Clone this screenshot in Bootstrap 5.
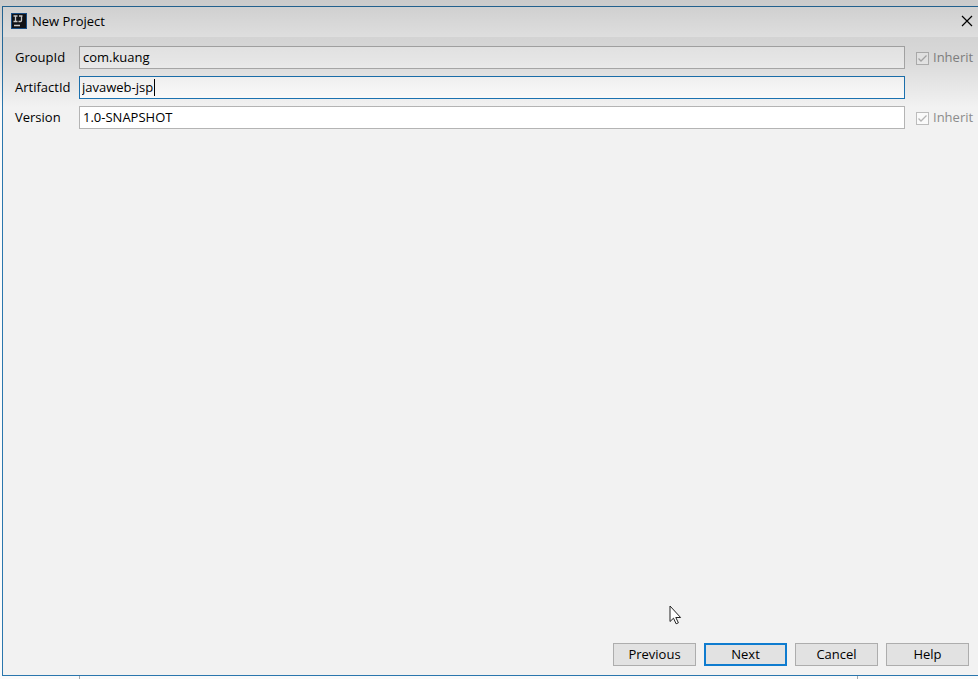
<!DOCTYPE html>
<html lang="en">
<head>
<meta charset="utf-8">
<meta name="viewport" content="width=device-width, initial-scale=1">
<title>New Project</title>
<link href="https://cdn.jsdelivr.net/npm/bootstrap@5.3.0/dist/css/bootstrap.min.css" rel="stylesheet">
<style>
body { font: 13px/20px "Open Sans", "Noto Sans", sans-serif; color: #000; background: #fafafa; padding: 6px 0 0 2px; }
.window { background: #f2f2f2; border: 1px solid #2a76ad; border-right: 0; }
.titlebar { background: #fff; height: 30px; padding: 0 4px 2px 8px; gap: 5px; }
.titlebar h1 { font-size: 13px; line-height: 20px; }
.close-btn { width: 14px; height: 14px; }
.fields { display: grid; grid-template-columns: 53px 1fr 54px; column-gap: 11px; row-gap: 7px; padding: 9px 8px 0 12px; }
.fields label { line-height: 23px; white-space: nowrap; }
.fields .form-control { height: 23px; min-height: 0; padding: 0 3px 1px; font: inherit; color: #000; border: 1px solid #b4b4b4; border-radius: 0; box-shadow: none; }
.fields .form-control.active-field { border-color: #1c74b4; padding-left: 2px; }
.text-caret { left: 75px; top: 3px; width: 1px; height: 17px; background: #000; }
.inherit { gap: 4px; color: #8c8c8c; }
.inherit input { appearance: none; width: 13px; height: 13px; margin: 1px 0 0; border: 1px solid #bcbcbc; flex: none;
  background: #fafafa url("data:image/svg+xml,%3Csvg xmlns='http://www.w3.org/2000/svg' viewBox='0 0 11 11'%3E%3Cpath d='M1.5 5.5 4 8l5.500-5.500' fill='none' stroke='%23b4b4b4' stroke-width='1.300'/%3E%3C/svg%3E"); }
.actions { gap: 8px; padding: 0 9px 9px; }
.actions .btn { width: 83px; height: 23px; padding: 0 0 1px; font: inherit; line-height: 18px; color: #000; background: #e2e2e2; border: 1px solid #adadad; border-radius: 0; }
.actions .btn.default-btn { border: 2px solid #0f7ccf; line-height: 16px; }
.under-strip { height: 3px; padding: 0 120px 0 77px; }
.under-strip div { height: 3px; border: solid #a4a9ae; border-width: 0 1px; }
.shade { height: 110px; pointer-events: none; background: linear-gradient(rgba(0,0,0,.19), rgba(0,0,0,.18) 10px, rgba(0,0,0,.13) 37px, rgba(0,0,0,.1) 60px, rgba(0,0,0,.05) 84px, rgba(0,0,0,0) 108px); }
.pointer { right: 296px; bottom: 50px; }
</style>
<script src="https://cdn.jsdelivr.net/npm/bootstrap@5.3.0/dist/js/bootstrap.bundle.min.js"></script>
</head>
<body class="min-vh-100 d-flex flex-column position-relative">
<main class="window flex-grow-1 d-flex flex-column position-relative">
  <header class="titlebar d-flex align-items-center">
    <svg width="16" height="16" viewBox="0 0 16 16" aria-hidden="true">
      <rect width="16" height="16" fill="#1c5a9c"/><rect x="1" y="1" width="14" height="14" fill="#14151a"/>
      <path d="M2.500 3h4M4.500 3v5.500M2.500 8.500h4M8 3h3.500M10.500 3v4.500q0 1-1 1H7.500M3 12.500h6" fill="none" stroke="#eee" stroke-width="1.300"/>
    </svg>
    <h1 class="m-0 fw-normal">New Project</h1>
    <button type="button" class="close-btn ms-auto border-0 bg-transparent p-0 d-flex align-items-center justify-content-center" aria-label="Close">
      <svg width="12" height="12" viewBox="0 0 12 12"><path d="M1 1l10 10M11 1 1 11" stroke="#000" stroke-width="1.200"/></svg>
    </button>
  </header>
  <form class="flex-grow-1 d-flex flex-column" onsubmit="return false">
    <div class="fields">
      <label for="group">GroupId</label>
      <input id="group" class="form-control" type="text" value="com.kuang">
      <label class="inherit d-flex align-items-center"><input type="checkbox" checked disabled>Inherit</label>
      <label for="artifact">ArtifactId</label>
      <div class="position-relative">
        <input id="artifact" class="form-control active-field" type="text" value="javaweb-jsp">
        <span class="text-caret position-absolute"></span>
      </div>
      <span></span>
      <label for="version">Version</label>
      <input id="version" class="form-control" type="text" value="1.0-SNAPSHOT">
      <label class="inherit d-flex align-items-center"><input type="checkbox" checked disabled>Inherit</label>
    </div>
    <div class="actions d-flex justify-content-end mt-auto">
      <button type="button" class="btn">Previous</button>
      <button type="submit" class="btn default-btn">Next</button>
      <button type="button" class="btn">Cancel</button>
      <button type="button" class="btn">Help</button>
    </div>
  </form>
  <svg class="pointer position-absolute" width="13" height="20" viewBox="0 0 13 20" aria-hidden="true">
    <path d="M1 1v15.500l3.500-3.300 2.600 5.600 2.300-1-2.600-5.300h4.800z" fill="#fff" stroke="#222" stroke-width="1"/>
  </svg>
</main>
<div class="under-strip"><div></div></div>
<div class="shade position-absolute top-0 start-0 end-0"></div>
</body>
</html>
